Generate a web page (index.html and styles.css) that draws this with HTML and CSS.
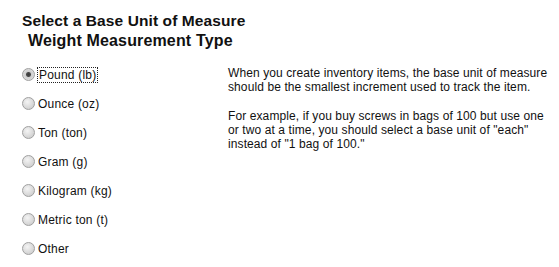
FILE: index.html
```html
<!DOCTYPE html>
<html lang="en">
<head>
    <meta charset="UTF-8">
    <title>Select a Base Unit of Measure</title>
    <link rel="stylesheet" href="styles.css">
</head>
<body>
    <div class="page">
        <h1 class="title">Select a Base Unit of Measure</h1>
        <h2 class="subtitle">Weight Measurement Type</h2>
        <div class="content">
            <form class="units">
                <label class="unit"><input type="radio" name="unit" checked><span class="focused">Pound (lb)</span></label>
                <label class="unit"><input type="radio" name="unit"><span>Ounce (oz)</span></label>
                <label class="unit"><input type="radio" name="unit"><span>Ton (ton)</span></label>
                <label class="unit"><input type="radio" name="unit"><span>Gram (g)</span></label>
                <label class="unit"><input type="radio" name="unit"><span>Kilogram (kg)</span></label>
                <label class="unit"><input type="radio" name="unit"><span>Metric ton (t)</span></label>
                <label class="unit"><input type="radio" name="unit"><span>Other</span></label>
            </form>
            <div class="help">
                <p>When you create inventory items, the base unit of measure should be the smallest increment used to track the item.</p>
                <p>For example, if you buy screws in bags of 100 but use one or two at a time, you should select a base unit of "each" instead of "1 bag of 100."</p>
            </div>
        </div>
    </div>
</body>
</html>
```

FILE: styles.css
```css
body {
    margin: 0;
    background-color: #ffffff;
    font-family: "Liberation Sans", Arial, sans-serif;
    color: #111111;
}

.page {
    padding: 12px 0 0 22px;
}

.title {
    margin: 0;
    font-size: 15.5px;
    font-weight: bold;
    letter-spacing: 0.1px;
    line-height: 18px;
}

.subtitle {
    margin: 2px 0 0 6px;
    font-size: 16px;
    font-weight: bold;
    letter-spacing: 0.15px;
    line-height: 18px;
}

.content {
    display: flex;
    margin-top: 10px;
}

.units {
    display: flex;
    flex-direction: column;
    width: 206px;
}

.unit {
    display: flex;
    align-items: center;
    height: 29px;
    font-size: 12px;
    letter-spacing: 0.2px;
}

.unit input {
    appearance: none;
    width: 13px;
    height: 13px;
    margin: 0 3px 0 0;
    border: 1px solid #a0a0a0;
    border-radius: 50%;
    background: radial-gradient(circle at 40% 35%, #f4f4f4 0%, #d8d8d8 60%, #c4c4c4 100%);
}

.unit input:checked {
    background: radial-gradient(circle, #3a3a3a 0, #4a4a4a 2px, #cfcfcf 3px, #e6e6e6 100%);
}

.focused {
    outline: 1px dotted #222222;
    padding: 0 1px;
}

.help {
    font-size: 12px;
    line-height: 14px;
    letter-spacing: 0.1px;
    padding-top: 6px;
}

.help p {
    margin: 0 0 15px 0;
    width: 324px;
}
```
